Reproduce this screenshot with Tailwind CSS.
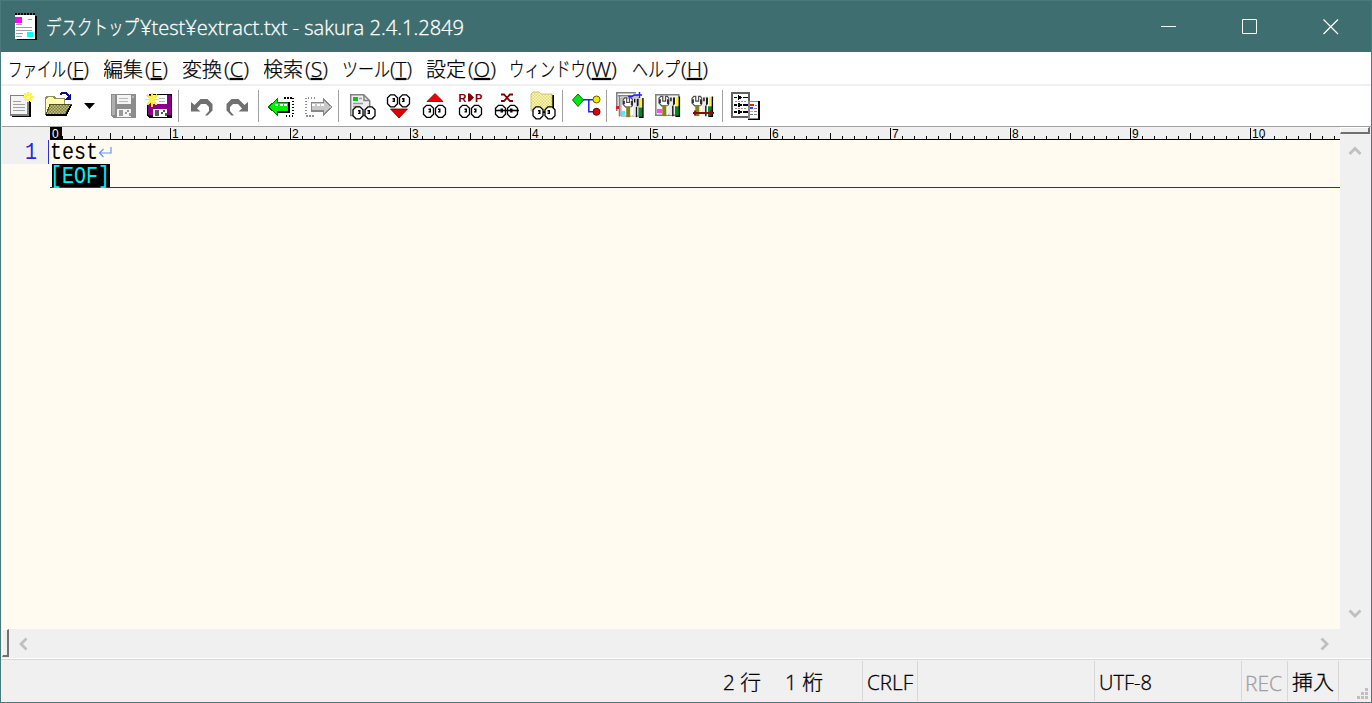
<!DOCTYPE html>
<html lang="ja">
<head>
  <meta charset="UTF-8" />
  <meta name="viewport" content="width=device-width, initial-scale=1.0" />
  <title>extract.txt - sakura 2.4.1.2849</title>
  <script src="https://cdn.jsdelivr.net/npm/@tailwindcss/browser@4"></script>
</head>
<body class="overflow-hidden">
<div class="w-[1372px] h-[703px] flex flex-col bg-[#f0f0f0] border border-[#4a7b7c] text-black font-['Open_Sans','Noto_Sans_CJK_JP',sans-serif]">

  <!-- Title bar -->
  <header class="h-[51px] shrink-0 bg-[#3f6e70] flex items-center text-white">
    <svg class="ml-[12px] w-[26px] h-[30px] shrink-0" viewBox="14 11 26 30" shape-rendering="crispEdges">
      <path d="M18 15h20v24H18z" fill="#000" />
      <path d="M16 14h20v24H16z" fill="#fff" />
      <path d="M16 13h21" stroke="#000" stroke-width="2" stroke-dasharray="1.5 1.5" />
      <path d="M16 16h7v6h-7z" fill="#f0f" />
      <path d="M28 31h6v5h-6z" fill="#0ff" />
      <path d="M29 18.500h4M17 23.500h6M17 26.500h16M17 29.500h16M17 32h7M17 35h6" stroke="#a0a0a0" />
    </svg>
    <h1 class="ml-[7px] w-[430px] h-[28px] text-[20px] leading-[28px] whitespace-nowrap">
      <svg class="w-[430px] h-[28px] font-light stroke-white stroke-[0.3px]" fill="#fff">
        <text x="0" y="22" textLength="93" lengthAdjust="spacingAndGlyphs">デスクトップ</text>
        <text x="94" y="22" textLength="324" lengthAdjust="spacingAndGlyphs">¥test¥extract.txt - sakura 2.4.1.2849</text>
      </svg>
    </h1>
    <div class="ml-auto flex">
      <svg class="w-[81px] h-[51px]" viewBox="0 0 81 51"><path d="M33 25.500h15" stroke="#fff" /></svg>
      <svg class="w-[81px] h-[51px]" viewBox="0 0 81 51"><path d="M33.500 18.500h14v14h-14z" fill="none" stroke="#fff" /></svg>
      <svg class="w-[81px] h-[51px]" viewBox="0 0 81 51"><path d="M33.500 18.500l14.500 14.500M48 18.500L33.500 33" stroke="#fff" stroke-width="1.200" /></svg>
    </div>
  </header>

  <!-- Menu -->
  <nav class="h-[34px] shrink-0 bg-white border-b-2 border-[#f0f0f0] flex items-center gap-[15px] pl-[7px] pt-[2px] text-[20px] font-light stroke-black stroke-[0.25px]">
    <svg class="w-[81px] h-[28px]"><text x="0" y="22" textLength="58" lengthAdjust="spacingAndGlyphs">ファイル</text><text x="59" y="22" textLength="22" lengthAdjust="spacingAndGlyphs">(<tspan class="underline">F</tspan>)</text></svg>
    <svg class="w-[64px] h-[28px]"><text x="-1" y="22" textLength="40" lengthAdjust="spacingAndGlyphs">編集</text><text x="41" y="22" textLength="23" lengthAdjust="spacingAndGlyphs">(<tspan class="underline">E</tspan>)</text></svg>
    <svg class="w-[66px] h-[28px]"><text x="-1" y="22" textLength="40" lengthAdjust="spacingAndGlyphs">変換</text><text x="41" y="22" textLength="25" lengthAdjust="spacingAndGlyphs">(<tspan class="underline">C</tspan>)</text></svg>
    <svg class="w-[64px] h-[28px]"><text x="-1" y="22" textLength="40" lengthAdjust="spacingAndGlyphs">検索</text><text x="41" y="22" textLength="23" lengthAdjust="spacingAndGlyphs">(<tspan class="underline">S</tspan>)</text></svg>
    <svg class="w-[69px] h-[28px]"><text x="-1" y="22" textLength="48" lengthAdjust="spacingAndGlyphs">ツール</text><text x="47" y="22" textLength="22" lengthAdjust="spacingAndGlyphs">(<tspan class="underline">T</tspan>)</text></svg>
    <svg class="w-[69px] h-[28px]"><text x="-1" y="22" textLength="40" lengthAdjust="spacingAndGlyphs">設定</text><text x="41" y="22" textLength="28" lengthAdjust="spacingAndGlyphs">(<tspan class="underline">O</tspan>)</text></svg>
    <svg class="w-[106px] h-[28px] overflow-visible"><text x="-2" y="22" textLength="77" lengthAdjust="spacingAndGlyphs">ウィンドウ</text><text x="75" y="22" textLength="31" lengthAdjust="spacingAndGlyphs">(<tspan class="underline">W</tspan>)</text></svg>
    <svg class="w-[78px] h-[28px]"><text x="0" y="22" textLength="48" lengthAdjust="spacingAndGlyphs">ヘルプ</text><text x="49" y="22" textLength="27" lengthAdjust="spacingAndGlyphs">(<tspan class="underline">H</tspan>)</text></svg>
  </nav>

  <!-- Shared icon parts -->
  <svg class="absolute w-0 h-0">
    <defs>
      <pattern id="dither" width="3" height="3" patternUnits="userSpaceOnUse">
        <path d="M0 0h3v3H0z" fill="#fffbb0" /><path d="M0 0h1.500v1.500H0zM1.500 1.500H3V3H1.500z" fill="#e0d880" />
      </pattern>
      <pattern id="olive" width="3" height="3" patternUnits="userSpaceOnUse">
        <path d="M0 0h3v3H0z" fill="#808020" /><path d="M0 0h1.500v1.500H0zM1.500 1.500H3V3H1.500z" fill="#c0c0a0" />
      </pattern>
      <symbol id="eyes" viewBox="0 0 25 14" overflow="visible">
        <path d="M4 .8h4l3 3v6l-3 3H4l-3-3v-6zM16 .8h4l3 3v6l-3 3h-4l-3-3v-6z" fill="#fff" stroke="#000" stroke-width="1.300" />
        <path d="M6 4h2.500v4H6V6.800h1V5.500H6zM15.500 4h2.500v4h-2.500V6.800h1V5.500h-1z" fill="#000" />
      </symbol>
      <symbol id="tools" viewBox="0 0 24 24" overflow="visible">
        <path d="M0 3l2-2h2v5h3V1h2l2 3v4l-2 3H3L0 8z" fill="#fff" stroke="#505050" stroke-width="1.300" />
        <path d="M0 4h2v4H0zM8.500 4h2.500v5H8.500z" fill="#303030" />
        <path d="M3.500 10.500H8V22H3.500z" fill="#85801a" />
        <path d="M8 11h1.500v10H8z" fill="#f8f8d0" />
        <path d="M11 2l3-1h3v7l-2 3v10h-4V10z" fill="#e8e8e8" />
        <path d="M12 2h1.500v4H12zM15 2h2v7l-2 2zM14 11h1.500v11H14z" fill="#101010" />
        <path d="M18 1.500h3v10h-3z" fill="#fff030" />
        <path d="M17 11.500h4.500V22H17z" fill="#008828" />
        <path d="M21 1h1.500v22h-5v-1.500H21z" fill="#000" />
      </symbol>
    </defs>
  </svg>

  <!-- Toolbar -->
  <div class="h-[40px] shrink-0 bg-white flex items-center pl-[2px]">
    <svg class="w-[36px] h-[36px]" viewBox="3 88 36 36" shape-rendering="crispEdges">
      <path d="M12 96h13l5.500 6v15H12z" fill="#000" />
      <path d="M10.500 95.500h12.500l5 5v14.500H10.500z" fill="#f4f4f4" stroke="#808080" stroke-width="1.500" />
      <path d="M13 101.500h8M13 104.500h12M13 107.500h12M13 110.500h12" stroke="#a0a0a0" stroke-width="1.500" />
      <path d="M28 92v10M23 97h11M24.500 93.500l7 7M31.500 93.500l-7 7" stroke="#fff04a" stroke-width="1.500" />
      <path d="M27 96h3v3h-3z" fill="#ff9" />
    </svg>
    <svg class="w-[42px] h-[36px]" viewBox="39 88 42 36" shape-rendering="crispEdges">
      <path d="M45.500 114V98.500l2-2h6l2 2h9v7" fill="#fffbb0" stroke="#909060" stroke-width="1.500" />
      <path d="M50 104.500h21l-6 10H46z" fill="url(#olive)" stroke="#505020" />
      <path d="M46 115h20l5-10" fill="none" stroke="#000" stroke-width="2" />
      <path d="M60 94.500l2-1.500h4l3 3v2" fill="none" stroke="#101080" stroke-width="2" />
      <path d="M71 93v7h-7z" fill="#101080" />
    </svg>
    <svg class="w-[24px] h-[36px]" viewBox="81 88 24 36"><path d="M84 103h11l-5.500 6z" fill="#000" /></svg>
    <svg class="w-[36px] h-[36px]" viewBox="105 88 36 36" shape-rendering="crispEdges">
      <path d="M111 94h25v24h-23l-2-2z" fill="#8c8c8c" />
      <path d="M112 95h3v20h-3z" fill="#b0b0b0" />
      <path d="M117 95h13.500v9H117zM117 109h14v8h-14z" fill="#f4f4f4" />
      <path d="M119 98.500h9M119 101.500h9M133 96v2" stroke="#b8b8b8" stroke-width="1.500" />
      <path d="M119 110h4v6h-4zM127 110h2v2h-2zM125 112h2v2h-2zM129 113h2v3h-2z" fill="#999" />
    </svg>
    <svg class="w-[36px] h-[36px]" viewBox="141 88 36 36" shape-rendering="crispEdges">
      <path d="M147 94h25v24h-23l-2-2z" fill="#000" />
      <path d="M148 95h23v20h-23z" fill="#8b008b" />
      <path d="M153 95h13.500v9H153zM153 109h14v8h-14z" fill="#fff" />
      <path d="M159 98.500h6M159 101.500h6" stroke="#b8b8b8" stroke-width="1.500" />
      <path d="M155 110h4v6h-4zM163 110h2v2h-2zM161 112h2v2h-2zM165 113h2v3h-2z" fill="#555" />
      <path d="M144 93h5v11h-5z" fill="#fff" />
      <path d="M152 93v14M145 99.500h14M147 95l10 10M157 95l-10 10" stroke="#ffe92e" stroke-width="1.500" />
      <path d="M149 96h6v6h-6z" fill="#fff04a" />
    </svg>
    <div class="w-px h-[32px] ml-px mr-[4px] bg-[#a0a0a0]"></div>
    <svg class="w-[36px] h-[36px]" viewBox="183 88 36 36">
      <path d="M191 102v9.500h9.500l-3.500-3 4-4.500h5l3 3v4l-4 4.500h2.500l5-5v-6.500l-5-5h-7l-6 6z" fill="#707070" />
    </svg>
    <svg class="w-[36px] h-[36px]" viewBox="219 88 36 36">
      <path d="M248 102v9.500h-9.500l3.500-3-4-4.500h-5l-3 3v4l4 4.500h-2.500l-5-5v-6.500l5-5h7l6 6z" fill="#707070" />
    </svg>
    <div class="w-px h-[32px] ml-[3px] mr-[4px] bg-[#a0a0a0]"></div>
    <svg class="w-[37px] h-[36px]" viewBox="263 88 37 36" shape-rendering="crispEdges">
      <path d="M284 97.800h9v18h-9" fill="none" stroke="#000" stroke-width="1.500" stroke-dasharray="1.500 1.500" />
      <path d="M268.500 107l8.500-8v3.500h11v8.500h-11v4z" fill="#00f000" stroke="#107010" />
      <path d="M277 111.500h12V102" fill="none" stroke="#000" stroke-width="2" />
      <path d="M275 105h13" stroke="#fff" stroke-width="1.500" stroke-dasharray="3 1.500" />
    </svg>
    <svg class="w-[36px] h-[36px]" viewBox="300 88 36 36" shape-rendering="crispEdges">
      <path d="M315 97.800h-9v18h9" fill="none" stroke="#909090" stroke-width="1.500" stroke-dasharray="1.500 1.500" />
      <path d="M332 107l-8.500-8v3.500h-12v8.500h12v4z" fill="#c8c8c8" stroke="#888" stroke-width="1.300" />
      <path d="M312 105h13" stroke="#fff" stroke-width="1.500" stroke-dasharray="3 1.500" />
    </svg>
    <div class="w-px h-[32px] ml-[2px] mr-[6px] bg-[#a0a0a0]"></div>
    <svg class="w-[36px] h-[36px]" viewBox="345 88 36 36">
      <path d="M350.700 94.700h13l6 6v14.800h-19z" fill="#eee" stroke="#808080" stroke-width="1.500" />
      <path d="M364 95v5.500h5" fill="none" stroke="#808080" stroke-width="1.500" />
      <path d="M353 97h5v4h-5z" fill="#00c818" />
      <path d="M359 98.500h3M353 103.500h10M353 106.500h7" stroke="#999" stroke-width="1.500" />
      <use href="#eyes" x="352" y="106" width="25" height="14" />
    </svg>
    <svg class="w-[36px] h-[36px]" viewBox="381 88 36 36">
      <use href="#eyes" x="386.500" y="94" width="25" height="14" />
      <path d="M390.500 109h17l-8.500 9z" fill="#e00000" stroke="#600000" stroke-width=".8" />
    </svg>
    <svg class="w-[36px] h-[36px]" viewBox="417 88 36 36">
      <path d="M427 101.500h16l-8-8z" fill="#f00000" stroke="#800000" stroke-width=".8" />
      <use href="#eyes" x="422.500" y="104.500" width="25" height="14" />
    </svg>
    <svg class="w-[36px] h-[36px]" viewBox="453 88 36 36">
      <g fill="#800000" class="text-[11px] font-bold font-['Liberation_Sans',sans-serif]">
        <text x="458.500" y="101.500">R</text><text x="475" y="101.500">P</text>
        <path d="M468 93.500h2l4 4-4 4h-2z" />
      </g>
      <use href="#eyes" x="458.500" y="104.500" width="25" height="14" />
    </svg>
    <svg class="w-[36px] h-[36px]" viewBox="489 88 36 36">
      <path d="M501 94.500h3l6 6.500h3M513 94.500h-3l-6 6.500h-3" fill="none" stroke="#800000" stroke-width="1.800" />
      <use href="#eyes" x="494.500" y="104.500" width="25" height="14" />
      <path d="M495 110.500h24" stroke="#000" stroke-width="1.600" />
    </svg>
    <svg class="w-[36px] h-[36px]" viewBox="525 88 36 36">
      <path d="M534 95h20v18h-20z" fill="#000" />
      <path d="M531 94l2-2h6l2 2h11v17h-21z" fill="url(#dither)" stroke="#c0b860" stroke-width=".8" />
      <use href="#eyes" x="532" y="106" width="25" height="14" />
    </svg>
    <div class="w-px h-[32px] ml-px mr-[5px] bg-[#a0a0a0]"></div>
    <svg class="w-[36px] h-[36px]" viewBox="568 88 36 36">
      <path d="M583 99.800h10M588.800 99.800v12h5" fill="none" stroke="#2020ff" stroke-width="1.500" />
      <path d="M572.500 100l5.500-6 5.500 6-5.500 6.500z" fill="#00e810" stroke="#087008" />
      <circle cx="596.500" cy="99.500" r="3.500" fill="#f0e800" stroke="#605800" />
      <circle cx="596.500" cy="111.800" r="3.500" fill="#e00000" stroke="#600000" />
    </svg>
    <div class="w-px h-[32px] ml-[2px] mr-[6px] bg-[#a0a0a0]"></div>
    <svg class="w-[36px] h-[36px]" viewBox="613 88 36 36">
      <path d="M616.800 93v18M616 92.800h20M619.500 96v20.500M618 95.800h20" fill="none" stroke="#808080" stroke-width="1.600" />
      <path d="M621 98h18v18h-18z" fill="#fff" stroke="#909090" />
      <path d="M628 96.500h4l2-1.500h8M639.500 92v6" fill="none" stroke="#2020ff" stroke-width="1.500" />
      <path d="M616 106h3v3h-3z" fill="#d02020" />
      <path d="M621 111h4v4h-4z" fill="#40f0ff" />
      <use href="#tools" x="623" y="97" width="22" height="22" />
    </svg>
    <svg class="w-[36px] h-[36px]" viewBox="649 88 36 36">
      <path d="M655.800 94.800h23v20.500h-23z" fill="#f4f4f4" stroke="#808080" stroke-width="1.500" />
      <path d="M657 109h5v4h-5z" fill="#f050f0" />
      <use href="#tools" x="659" y="95.500" width="22.500" height="22.500" />
    </svg>
    <svg class="w-[36px] h-[36px]" viewBox="685 88 36 36">
      <use href="#tools" x="692" y="95.500" width="22.500" height="22.500" />
      <path d="M693 113h21M695 110.500v5M711 110.500v5" stroke="#900808" stroke-width="1.800" />
    </svg>
    <div class="w-px h-[32px] ml-px mr-[5px] bg-[#a0a0a0]"></div>
    <svg class="w-[36px] h-[36px]" viewBox="729 88 36 36" shape-rendering="crispEdges">
      <path d="M732.800 92.800h17.500v24h-17.500z" fill="#fff" stroke="#606060" stroke-width="2" />
      <path d="M735 97.500h3M739.500 96l2.500 1.500-2.500 1.500zM744 97.500h5M735 105h3M739.500 103.500l2.500 1.500-2.500 1.500zM744 105h5M735 112h3M739.500 110.500l2.500 1.500-2.500 1.500zM744 112h5" fill="#000" stroke="#000" stroke-width="1.500" />
      <path d="M736 101h12M736 108.500h12" stroke="#999" stroke-dasharray="1.500 1.500" />
      <path d="M749.800 101.500h9.500v17h-9.500z" fill="#fff" stroke="#888" stroke-width="1.500" />
      <path d="M760 101v18.500h-11" fill="none" stroke="#000" stroke-width="1.500" />
      <path d="M751 105h4" stroke="#e02020" stroke-width="1.800" />
      <path d="M751 108h3" stroke="#4040f0" stroke-width="1.500" />
      <path d="M751 111.500h3" stroke="#d8c820" stroke-width="1.500" />
      <path d="M751 114.500h3" stroke="#30a050" stroke-width="1.500" />
      <path d="M755.500 105h2M755 108h3M755 111.500h3M755 114.500h3" stroke="#888" />
    </svg>
  </div>

  <!-- Editor and vertical scrollbar -->
  <main class="h-[503px] shrink-0 flex border-t border-[#a0a0a0] ml-px">
    <div class="w-[1338px] flex flex-col bg-[#fffbf0] font-['Liberation_Mono',monospace] text-[20px]">
      <!-- Ruler -->
      <div class="h-[13px] shrink-0 flex bg-[#f0f0f0] pl-[48px]">
        <div class="relative flex w-[1290px] overflow-hidden border-b border-black text-[12px] leading-[14px] font-['Liberation_Sans',sans-serif]">
          <svg class="absolute inset-0 w-[1290px] h-[12px]" shape-rendering="crispEdges">
            <defs>
              <pattern id="ticks" width="120" height="12" patternUnits="userSpaceOnUse">
                <path d="M0 1h1v11H0zM12 9h1v3h-1zM24 9h1v3h-1zM36 9h1v3h-1zM48 9h1v3h-1zM60 6h1v6h-1zM72 9h1v3h-1zM84 9h1v3h-1zM96 9h1v3h-1zM108 9h1v3h-1z" />
              </pattern>
            </defs>
            <rect width="1290" height="12" fill="url(#ticks)" />
          </svg>
          <div class="w-[120px] shrink-0"><span class="relative block w-[12px] bg-black text-white pl-[2px]">0</span></div>
          <div class="w-[120px] shrink-0 pl-[2px]">1</div>
          <div class="w-[120px] shrink-0 pl-[2px]">2</div>
          <div class="w-[120px] shrink-0 pl-[2px]">3</div>
          <div class="w-[120px] shrink-0 pl-[2px]">4</div>
          <div class="w-[120px] shrink-0 pl-[2px]">5</div>
          <div class="w-[120px] shrink-0 pl-[2px]">6</div>
          <div class="w-[120px] shrink-0 pl-[2px]">7</div>
          <div class="w-[120px] shrink-0 pl-[2px]">8</div>
          <div class="w-[120px] shrink-0 pl-[2px]">9</div>
          <div class="w-[120px] shrink-0 pl-[2px]">10</div>
        </div>
      </div>
      <!-- Lines -->
      <div class="h-[24px] shrink-0 flex leading-[26px]">
        <div class="w-[47px] bg-[#f0f0f0] border-r border-[#3030d0] text-[#2828e0] text-right pr-[11px]"><span class="inline-block scale-y-115">1</span></div>
        <span class="ml-px inline-block scale-y-115">test</span>
        <svg class="w-[14px] h-[24px]" viewBox="0 0 14 24"><path d="M13 7v6H1.500M5.500 9l-4 4 4 4" fill="none" stroke="#6a94f0" stroke-width="1.200" /></svg>
      </div>
      <div class="h-[24px] shrink-0 ml-[48px] border-b border-[#2828b0] leading-[25px]">
        <div class="w-[58px] h-[23px] ml-[2px] bg-black text-[#00f0f0]"><span class="inline-block -ml-[2px] scale-y-115">[EOF]</span></div>
      </div>
    </div>
    <div class="w-[30px] flex flex-col items-center bg-[#f0f0f0]">
      <div class="w-full h-[7px] bg-[#f0f0f0] border-t border-l border-white border-r-2 border-b-2 border-r-[#707070] border-b-[#707070]"></div>
      <svg class="w-[14px] h-[10px] mt-[12px]" viewBox="0 0 14 10"><path d="M1.500 8L7 2.500l5.500 5.500" fill="none" stroke="#bfbfbf" stroke-width="2.800" /></svg>
      <svg class="w-[14px] h-[10px] mt-auto mb-[10px]" viewBox="0 0 14 10"><path d="M1.500 1.500L7 7l5.500-5.500" fill="none" stroke="#bfbfbf" stroke-width="2.800" /></svg>
    </div>
  </main>

  <!-- Horizontal scrollbar -->
  <div class="h-[29px] shrink-0 flex items-center ml-px pb-px">
    <div class="w-[7px] h-full bg-[#f0f0f0] border-t border-l border-white border-r-2 border-b-2 border-r-[#707070] border-b-[#707070]"></div>
    <svg class="w-[10px] h-[14px] ml-[9px] mt-px" viewBox="0 0 10 14"><path d="M8.500 1.500L3 7l5.500 5.500" fill="none" stroke="#bfbfbf" stroke-width="2.800" /></svg>
    <svg class="w-[10px] h-[14px] ml-auto mr-[41px] mt-px" viewBox="0 0 10 14"><path d="M1.500 1.500L7 7l-5.500 5.500" fill="none" stroke="#bfbfbf" stroke-width="2.800" /></svg>
  </div>

  <!-- Status bar -->
  <footer class="relative h-[44px] shrink-0 border-t border-white text-[20px] font-light">
    <div class="h-full flex border-t border-[#d7d7d7] pt-px pb-px stroke-black stroke-[0.3px]">
      <div class="w-[862px] pl-[721px] border-r border-[#d7d7d7]"><svg class="w-[110px] h-[40px]"><text x="1" y="29" textLength="38" lengthAdjust="spacingAndGlyphs">2 行</text><text x="63" y="29" textLength="38" lengthAdjust="spacingAndGlyphs">1 桁</text></svg></div>
      <div class="w-[55px] pl-[4px] border-r border-[#d7d7d7]"><svg class="w-[50px] h-[40px]"><text x="0" y="29" textLength="46" lengthAdjust="spacingAndGlyphs">CRLF</text></svg></div>
      <div class="w-[177px] border-r border-[#d7d7d7]"></div>
      <div class="w-[147px] pl-[4px] border-r border-[#d7d7d7]"><svg class="w-[60px] h-[40px]"><text x="0" y="29" textLength="53" lengthAdjust="spacingAndGlyphs">UTF-8</text></svg></div>
      <div class="w-[46px] pl-[3px] border-r border-[#d7d7d7]"><svg class="w-[42px] h-[40px] stroke-[#a0a0a0]" fill="#a0a0a0"><text x="0" y="30" textLength="37" lengthAdjust="spacingAndGlyphs">REC</text></svg></div>
      <div class="w-[51px] pl-[4px] border-r border-[#d7d7d7]"><svg class="w-[45px] h-[40px]"><text x="0" y="29" textLength="42" lengthAdjust="spacingAndGlyphs">挿入</text></svg></div>
    </div>
    <svg class="absolute right-[2px] bottom-[2px] w-[12px] h-[12px]" viewBox="0 0 12 12" fill="#bfbfbf"><path d="M8 0h3v3H8zM4 4h3v3H4zM8 4h3v3H8zM0 8h3v3H0zM4 8h3v3H4zM8 8h3v3H8z" /></svg>
  </footer>
</div>
</body>
</html>
